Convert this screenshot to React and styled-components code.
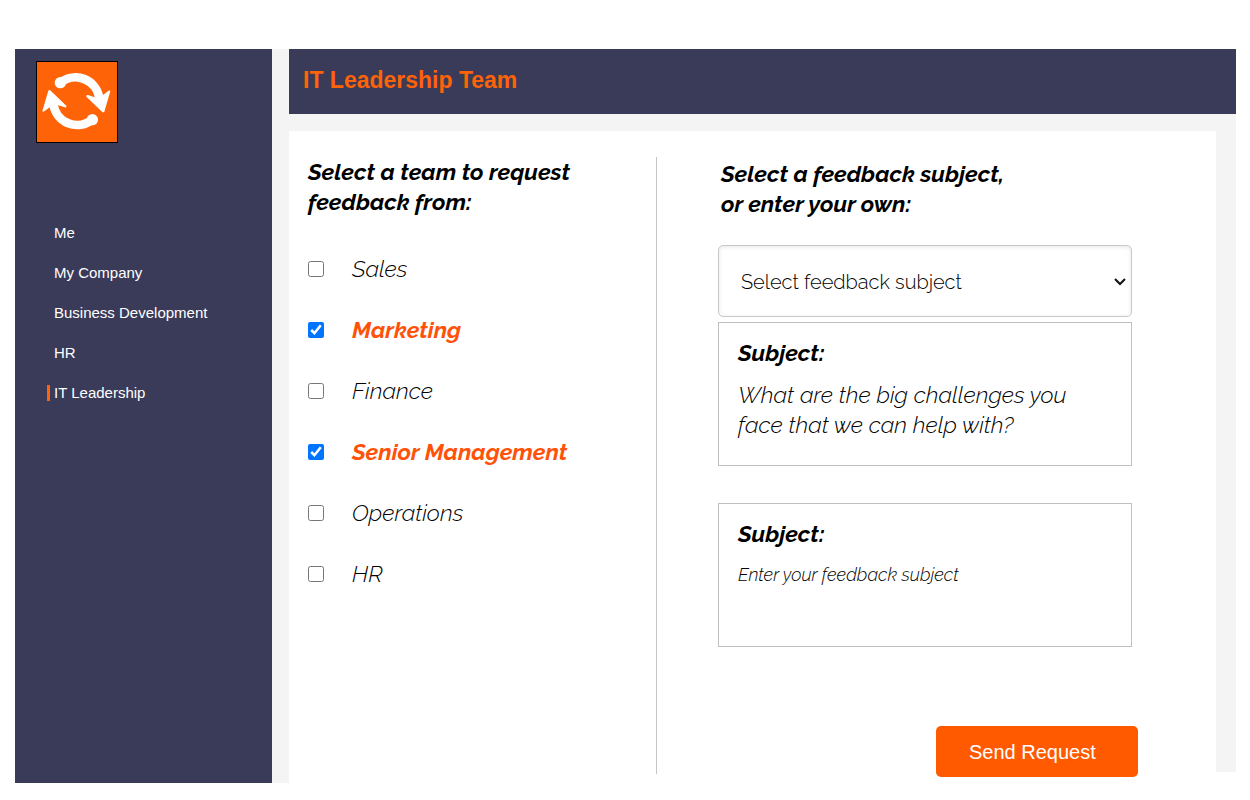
import React, { useState } from 'react'
import styled, { createGlobalStyle } from 'styled-components'

const links = ['Me', 'My Company', 'Business Development', 'HR', 'IT Leadership']
const teams = ['Sales', 'Marketing', 'Finance', 'Senior Management', 'Operations', 'HR']

const Logo = () => (
  <LogoBox viewBox='18 18 246 246' role='img' aria-label='Feedback loop'>
    <rect x='19.5' y='19.5' width='243' height='243' fill='#ff6308' stroke='#000' strokeWidth='3' />
    <g id='arrow' fill='#fff'>
      <circle cx='91' cy='83' r='17' />
      <path d='M90 84 A72 72 0 0 1 208 132' fill='none' stroke='#fff' strokeWidth='26' />
      <path d='M241 109 L223 170 Q220 174 216 170 L169 125 Q167 119 174 120 L198 128 L219 120 L235 108 Q240 105 241 109Z' />
    </g>
    <use href='#arrow' transform='rotate(180 139 138.5)' />
  </LogoBox>
)

const App = () => {
  const [active, setActive] = useState('IT Leadership')
  const [selected, setSelected] = useState(['Marketing', 'Senior Management'])

  const toggleTeam = (team) => {
    setSelected(selected.includes(team) ? selected.filter((t) => t !== team) : [...selected, team])
  }

  return (
    <Page>
      <GlobalStyle />
      <Sidebar>
        <Logo />
        <NavList>
          {links.map((link) => (
            <li key={link}>
              <NavLink href='#' $active={link === active} onClick={() => setActive(link)}>{link}</NavLink>
            </li>
          ))}
        </NavList>
      </Sidebar>
      <Main>
        <Header>
          <h1>IT Leadership Team</h1>
        </Header>
        <Body>
          <Panel>
            <TeamColumn>
              <Title>Select a team to request<br />feedback from:</Title>
              <TeamList>
                {teams.map((team) => (
                  <TeamRow key={team} $checked={selected.includes(team)}>
                    <input type='checkbox' checked={selected.includes(team)} onChange={() => toggleTeam(team)} />
                    {team}
                  </TeamRow>
                ))}
              </TeamList>
            </TeamColumn>
            <SubjectColumn>
              <Title>Select a feedback subject,<br />or enter your own:</Title>
              <SelectWrap>
                <Select aria-label='Feedback subject' defaultValue=''>
                  <option value=''>Select feedback subject</option>
                </Select>
                <Chevron viewBox='0 0 12 8'>
                  <path d='M1 1 L6 6 L11 1' fill='none' stroke='#111' strokeWidth='2' />
                </Chevron>
              </SelectWrap>
              <Card>
                <CardTitle>Subject:</CardTitle>
                <p>What are the big challenges you<br />face that we can help with?</p>
              </Card>
              <Card $spaced>
                <CardTitle as='label' htmlFor='subject'>Subject:</CardTitle>
                <textarea id='subject' placeholder='Enter your feedback subject' />
              </Card>
              <SendButton type='button'>Send Request</SendButton>
            </SubjectColumn>
          </Panel>
          <Gutter />
        </Body>
      </Main>
    </Page>
  )
}

export default App

const GlobalStyle = createGlobalStyle`
  * {
    box-sizing: border-box;
  }
  body {
    margin: 0;
    background: #fff;
    color: #000;
    font-family: 'Liberation Sans', Arial, sans-serif;
  }
  h1, h2, h3, p, ul {
    margin: 0;
    padding: 0;
  }
`

const Page = styled.div`
  display: flex;
  min-height: 100vh;
  padding: 49px 14px 17px 15px;
`

const Sidebar = styled.aside`
  flex: 0 0 257px;
  padding: 12px 21px;
  background: #3a3a59;
`

const LogoBox = styled.svg`
  display: block;
  width: 82px;
  height: 82px;
`

const NavList = styled.ul`
  display: flex;
  flex-direction: column;
  gap: 24px;
  margin-top: 82px;
  padding-left: 11px;
  list-style: none;
`

const NavLink = styled.a`
  display: block;
  padding-left: 4px;
  border-left: 3px solid ${({ $active }) => ($active ? '#ff6308' : 'transparent')};
  color: #fff;
  font-size: 15px;
  line-height: 16px;
  text-decoration: none;
`

const Main = styled.main`
  flex: 1;
  display: flex;
  flex-direction: column;
  border-left: 17px solid #f4f4f4;
`

const Header = styled.header`
  padding: 15px 14px 18px;
  background: #3a3a59;
  h1 {
    color: #ff6308;
    font-size: 23px;
    line-height: 32px;
  }
`

const Body = styled.div`
  flex: 1;
  display: flex;
  border-top: 17px solid #f4f4f4;
`

const Gutter = styled.div`
  width: 20px;
  margin-bottom: 11px;
  background: #f4f4f4;
`

const Panel = styled.form`
  flex: 1;
  display: flex;
  padding: 26px 84px 6px 19px;
  font-family: Raleway, Lato, sans-serif;
`

const TeamColumn = styled.section`
  flex: 0 0 349px;
  margin-bottom: 3px;
  border-right: 1px solid #c4c4c4;
`

const SubjectColumn = styled.section`
  flex: 1;
  display: flex;
  flex-direction: column;
  padding: 2px 0 0 61px;
`

const Title = styled.h2`
  font-size: 23px;
  font-style: italic;
  font-weight: 700;
  line-height: 30px;
  ${SubjectColumn} & {
    padding-left: 3px;
  }
`

const TeamList = styled.div`
  margin-top: 21px;
`

const TeamRow = styled.label`
  display: flex;
  align-items: center;
  gap: 28px;
  height: 61px;
  color: ${({ $checked }) => ($checked ? '#ff5208' : '#000')};
  font-size: 23px;
  font-style: italic;
  font-weight: ${({ $checked }) => ($checked ? 700 : 300)};
  input {
    width: 16px;
    height: 16px;
    margin: 0;
  }
`

const SelectWrap = styled.div`
  position: relative;
  margin-top: 26px;
`

const Select = styled.select`
  appearance: none;
  display: block;
  width: 100%;
  height: 72px;
  padding: 2px 22px 0;
  border: 1px solid #c8c8c8;
  border-radius: 5px;
  background-color: #fff;
  box-shadow: inset 0 1px 4px rgba(0, 0, 0, 0.1);
  color: #000;
  font-family: inherit;
  font-size: 20px;
  font-weight: 300;
`

const Chevron = styled.svg`
  position: absolute;
  top: 33px;
  right: 6px;
  width: 12px;
  height: 8px;
  pointer-events: none;
`

const Card = styled.div`
  display: flex;
  flex-direction: column;
  gap: 12px;
  min-height: 144px;
  margin-top: ${({ $spaced }) => ($spaced ? '37px' : '5px')};
  padding: 15px 19px;
  border: 1px solid #c0c0c0;
  p {
    font-size: 23px;
    font-style: italic;
    font-weight: 300;
    line-height: 30px;
  }
  textarea {
    height: 60px;
    padding: 0;
    border: 0;
    outline: 0;
    resize: none;
    font-family: inherit;
    font-size: 18px;
    font-style: italic;
    font-weight: 300;
    line-height: 28px;
  }
  textarea::placeholder {
    color: #000;
  }
`

const CardTitle = styled.h3`
  font-size: 23px;
  font-style: italic;
  font-weight: 700;
  line-height: 30px;
`

const SendButton = styled.button`
  align-self: flex-end;
  width: 202px;
  height: 51px;
  margin: 79px -6px 0 0;
  padding: 2px 33px 0;
  border: 0;
  border-radius: 5px;
  background: #ff5a00;
  color: #fff;
  font-family: 'Liberation Sans', Arial, sans-serif;
  font-size: 20px;
  text-align: left;
`
